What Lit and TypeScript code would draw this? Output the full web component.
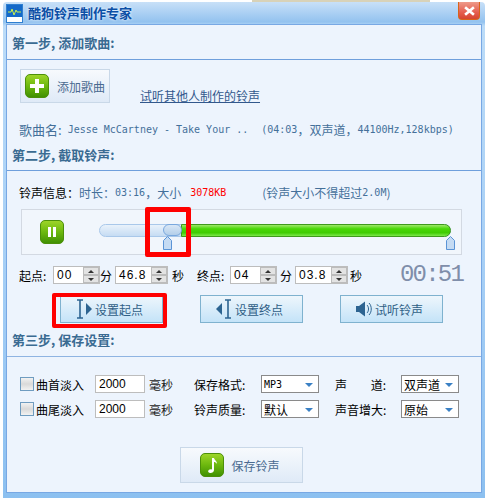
import { LitElement, html, css, svg } from "lit";
import { customElement } from "lit/decorators.js";

const greenIcon = (inner: unknown) => html`<svg class="gi" viewBox="0 0 24 24" width="24" height="24">
  <defs><linearGradient id="g" x1="0" y1="0" x2="0" y2="1"><stop offset="0" stop-color="#9fd62a"/><stop offset=".5" stop-color="#6cb80e"/><stop offset="1" stop-color="#3f8f02"/></linearGradient></defs>
  <rect x=".5" y=".5" width="23" height="23" rx="4.5" fill="url(#g)" stroke="#4c8f0a"/>${inner}</svg>`;

const plus = svg`<path d="M10 5h4v5h5v4h-5v5h-4v-5H5v-4h5z" fill="#fff"/>`;
const pause = svg`<path d="M8 7h3v10H8zM13 7h3v10h-3z" fill="#fff"/>`;
const note = svg`<path d="M12 5h2c.5 2.5 3 2.5 3 6-1-1.500-2-2-3-2v8c0 2-2 3.200-4 3-2-.2-2.500-2-1-3.200 1-.8 2-.8 3-.4z" fill="#fff"/>`;

const ibeamR = html`<svg viewBox="0 0 16 20" width="16" height="20"><path d="M1 1h6M4 1v18M1 19h6" fill="none" stroke="#2d6491" stroke-width="1.600"/><path d="M10 4l6 6-6 6z" fill="#2d6491"/></svg>`;
const ibeamL = html`<svg viewBox="0 0 16 20" width="16" height="20"><path d="M9 1h6M12 1v18M9 19h6" fill="none" stroke="#2d6491" stroke-width="1.600"/><path d="M6 4L0 10l6 6z" fill="#2d6491"/></svg>`;
const speaker = html`<svg viewBox="0 0 16 16" width="16" height="16"><path d="M0 5h3l6-4.500v15L3 11H0z" fill="#2d6491"/><path d="M11 4c2 2 2 6 0 8M13 2c3 3 3 9 0 12" fill="none" stroke="#2d6491"/></svg>`;
const flag = html`<svg viewBox="0 0 9 14" width="9" height="14"><path d="M4.500.5l4 4v9h-8v-9z" fill="#c5dbf3" stroke="#5b94d6"/></svg>`;

@customElement("app-root")
export class AppRoot extends LitElement {
  static styles = css`
    :host { display: block; position: relative; width: 488px; height: 500px; background: #fff; overflow: hidden;
      font-family: "Noto Sans CJK SC", "Liberation Sans", sans-serif; font-size: 12px; color: #000; }
    .peek { position: absolute; left: 252px; top: 0; width: 178px; height: 2px; background: #d8d2b8; }
    .window { margin: 2px 3px; height: 496px; box-sizing: border-box; display: flex; flex-direction: column; border-radius: 4px 4px 0 0;
      background: linear-gradient(#c8e0f8 0, #93c2ef 20px, #bcdcf8 24px, #a3cdf5 60%, #8cc0f0 100%); }
    .title { height: 22px; display: flex; align-items: center; padding-left: 3px; gap: 5px; position: relative; }
    .app-icon { width: 15px; height: 15px; border: 1px solid #2f7fd0; background: #fff; padding: 0 0 2px; display: flex; margin-top: 1px; }
    .title-text { font-size: 13px; font-weight: 700; color: #0b4fa6; text-shadow: 0 0 3px #fff; line-height: 22px; }
    .close { position: absolute; right: 5px; top: 0; width: 22px; height: 18px; box-sizing: border-box; border: 1px solid #d8641a; border-top: none; border-radius: 0 0 4px 4px;
      background: linear-gradient(#ee9a8a, #e55f50 60%, #d6452f); display: flex; align-items: center; justify-content: center; }
    .panel { flex: 1; margin: 0 3px 5px; border: 1px solid #78a8e4; background: #edf4fd; display: flex; flex-direction: column; min-height: 0; }
    .head { box-sizing: border-box; border-bottom: 1px solid #6f9fdc; padding-left: 5px; font-size: 13px; font-weight: 700; color: #3a6b92; display: flex; align-items: center; white-space: pre; }
    .h1 { height: 35px; }
    .h2 { height: 32px; }
    .h3 { height: 32px; padding-bottom: 3px; border-bottom-color: #8fb4e2; }
    .s1 { height: 79px; box-sizing: border-box; padding: 10px 0 0 13px; }
    .add-row { display: flex; align-items: flex-end; gap: 30px; height: 33px; }
    .btn { box-sizing: border-box; display: flex; align-items: center; background: linear-gradient(#f7fafd, #dfeaf7); border: 1px solid #c9d8e8; color: #4a6a90; }
    .add { width: 90px; height: 34px; padding-left: 4px; gap: 8px; font-size: 12px; }
    .gi { flex: none; display: block; }
    .link { color: #32588c; text-decoration: underline; line-height: 14px; }
    .song { display: flex; margin: 17px 0 0 -1px; color: #44709a; height: 18px; align-items: center; white-space: pre; }
    .song .nm { font-size: 13px; }
    .mono { font-family: "DejaVu Sans Mono", "Noto Sans CJK SC", monospace; font-size: 10px; }
    .song .stat { margin-left: 13px; display: flex; align-items: center; }
    .cjk { font-family: "Noto Sans CJK SC", sans-serif; font-size: 12px; }
    .s2 { height: 154px; box-sizing: border-box; padding: 13px 0 0 12px; }
    .info { display: flex; align-items: center; height: 16px; color: #44709a; white-space: pre; }
    .info b { font-weight: 400; color: #000; font-size: 12px; width: 60px; }
    .red { color: #f00; margin-left: 9px; }
    .limit { margin-left: 36px; display: flex; align-items: center; }
    .slider { box-sizing: border-box; width: 441px; height: 46px; margin: 9px 0 0 2px; border: 1px solid #d3d9e2; background: #f1f6fc; display: flex; align-items: center; padding-left: 18px; gap: 35px; }
    .track { position: relative; width: 352px; height: 13px; margin-top: -3px; box-sizing: border-box; border: 1px solid #a9c8ea; border-radius: 7px; background: linear-gradient(#e9f2fb, #c6dcf3); }
    .fill { position: absolute; left: 81px; right: -1px; top: -1px; bottom: -1px; border-radius: 0 7px 7px 0; border: 1px solid #3f9a1c; background: linear-gradient(#9ee86a, #49d806 35%, #3fcc02 70%, #7ce84a); }
    .handle { position: absolute; left: 63px; top: -1px; width: 19px; height: 12px; box-sizing: border-box; border: 1px solid #79a8de; border-radius: 6px; background: linear-gradient(#d9e7f6, #b3cee9); }
    .flag { position: absolute; top: 11px; display: block; }
    .flag svg { display: block; }
    .spin-row { display: flex; align-items: center; height: 18px; margin-top: 11px; white-space: pre; }
    .lbl { font-size: 12px; flex: none; }
    .l34 { width: 34px; } .l15 { width: 15px; } .l29 { width: 29px; padding-left: 4px; box-sizing: border-box; }
    .l33 { width: 33px; } .l18 { width: 18px; padding-left: 3px; box-sizing: border-box; } .l52 { width: 52px; padding-left: 2px; box-sizing: border-box; }
    .spin { box-sizing: border-box; height: 18px; flex: none; border: 1px solid #bdbdbd; background: #fff; display: flex; align-items: center; justify-content: space-between; font-family: "Liberation Sans", sans-serif; font-size: 12px; padding-left: 3px; letter-spacing: 1px; }
    .spin-b { width: 16px; height: 16px; display: flex; flex-direction: column; flex: none; }
    .spin-b i { flex: 1; background: #e3e3e3; border: 1px solid #bcbcbc; display: flex; align-items: center; justify-content: center; }
    .spin-b i::before { content: ""; border-left: 3px solid transparent; border-right: 3px solid transparent; }
    .spin-b i.up::before { border-bottom: 3px solid #333; }
    .spin-b i.dn::before { border-top: 3px solid #333; }
    .w47 { width: 47px; } .w53 { width: 53px; }
    .clock { font-family: "Liberation Mono", monospace; font-size: 24px; line-height: 18px; letter-spacing: -1.800px; color: #7f8eaa; }
    .acts { display: flex; margin: 11px 0 0 41px; gap: 37px; }
    .act { width: 103px; height: 28px; padding-left: 15px; gap: 3px; background: linear-gradient(#eef6fc, #c4e3f8); border: 1px solid #7fb2cf; color: #2f5f86; font-size: 12px; }
    .s3 { box-sizing: border-box; padding: 18px 0 0 13px; }
    .grid { display: grid; grid-template-columns: 75px 50px 49px 67px 58px 82px 58px; grid-auto-rows: 18px; row-gap: 7px; align-items: center; }
    .chk { display: flex; align-items: center; gap: 2px; }
    .box { width: 14px; height: 14px; box-sizing: border-box; border: 1px solid #6f9cc0; background: linear-gradient(#f2f2f2, #d9d9d9 50%, #f2f2f2); }
    .inp { box-sizing: border-box; height: 18px; width: 50px; border: 1px solid #bdbdbd; background: #fff; font-family: "Liberation Sans", sans-serif; font-size: 12px; padding-left: 3px; line-height: 16px; }
    .ms { padding-left: 4px; color: #222; }
    .sel { box-sizing: border-box; height: 18px; width: 58px; border: 1px solid #8a8a8a; background: #fff; display: flex; align-items: center; justify-content: space-between; padding: 0 5px 0 2px; }
    .sel::after { content: ""; border-left: 4px solid transparent; border-right: 4px solid transparent; border-top: 4px solid #3a80c4; margin-top: 2px; }
    .spread { padding-left: 16px; white-space: pre; }
    .wide { word-spacing: 21px; }
    .save-wrap { display: flex; justify-content: center; margin-top: 29px; padding-right: 19px; }
    .save { width: 123px; height: 36px; padding-left: 19px; gap: 8px; }
    .mark { position: absolute; box-sizing: border-box; border: 4px solid #f00; border-radius: 2px; pointer-events: none; }
    .m1 { left: 145px; top: 207px; width: 46px; height: 50px; border-width: 5px; }
    .m2 { left: 52px; top: 293px; width: 115px; height: 35px; }
  `;

  private spin(v: string, w: string) {
    return html`<span class="spin ${w}">${v}<span class="spin-b"><i class="up"></i><i class="dn"></i></span></span>`;
  }

  render() {
    return html`
      <div class="peek"></div>
      <div class="window">
        <div class="title">
          <span class="app-icon"><svg viewBox="0 0 15 15" width="15" height="15"><rect width="15" height="12" fill="#1469c8"/><path d="M1 7h3l1-3 2 6 2-5 1 2h4" fill="none" stroke="#c8f04a"/></svg></span>
          <span class="title-text">酷狗铃声制作专家</span>
          <span class="close"><svg viewBox="0 0 10 9" width="11" height="10"><path d="M1 1l8 7M9 1L1 8" stroke="#fff" stroke-width="2.400"/></svg></span>
        </div>
        <div class="panel">
          <div class="head h1">第一步, 添加歌曲:</div>
          <div class="s1">
            <div class="add-row">
              <div class="btn add">${greenIcon(plus)}添加歌曲</div>
              <span class="link">试听其他人制作的铃声</span>
            </div>
            <div class="song"><span class="nm">歌曲名:</span><span class="mono"> Jesse McCartney - Take Your ..</span><span class="mono stat">(04:03<span class="cjk">\uFF0C双声道\uFF0C</span>44100Hz,128kbps)</span></div>
          </div>
          <div class="head h2">第二步, 截取铃声:</div>
          <div class="s2">
            <div class="info"><b>铃声信息\uFF1A</b><span>时长\uFF1A</span><span class="mono">03:16</span><span>\uFF0C大小</span><span class="mono red">3078KB</span><span class="limit">(铃声大小不得超过<span class="mono">2.0M</span>)</span></div>
            <div class="slider">
              ${greenIcon(pause)}
              <div class="track">
                <div class="fill"></div>
                <div class="handle"></div>
                <span class="flag" style="left:63px">${flag}</span>
                <span class="flag" style="left:346px">${flag}</span>
              </div>
            </div>
            <div class="spin-row">
              <span class="lbl l34">起点:</span>${this.spin("00", "w47")}<span class="lbl l15">分</span>${this.spin("46.8", "w53")}<span class="lbl l29">秒</span>
              <span class="lbl l33">终点:</span>${this.spin("04", "w47")}<span class="lbl l18">分</span>${this.spin("03.8", "w53")}<span class="lbl l52">秒</span>
              <span class="clock">00:51</span>
            </div>
            <div class="acts">
              <div class="btn act">${ibeamR}设置起点</div>
              <div class="btn act">${ibeamL}设置终点</div>
              <div class="btn act">${speaker}试听铃声</div>
            </div>
          </div>
          <div class="head h3">第三步, 保存设置:</div>
          <div class="s3">
            <div class="grid">
              <span class="chk"><span class="box"></span>曲首淡入</span><span class="inp">2000</span><span class="ms">毫秒</span><span>保存格式:</span><span class="sel"><span class="mono">MP3</span></span><span class="spread wide">声 道:</span><span class="sel">双声道</span>
              <span class="chk"><span class="box"></span>曲尾淡入</span><span class="inp">2000</span><span class="ms">毫秒</span><span>铃声质量:</span><span class="sel">默认</span><span class="spread">声音增大:</span><span class="sel">原始</span>
            </div>
            <div class="save-wrap"><div class="btn save">${greenIcon(note)}保存铃声</div></div>
          </div>
        </div>
      </div>
      <div class="mark m1"></div>
      <div class="mark m2"></div>
    `;
  }
}
